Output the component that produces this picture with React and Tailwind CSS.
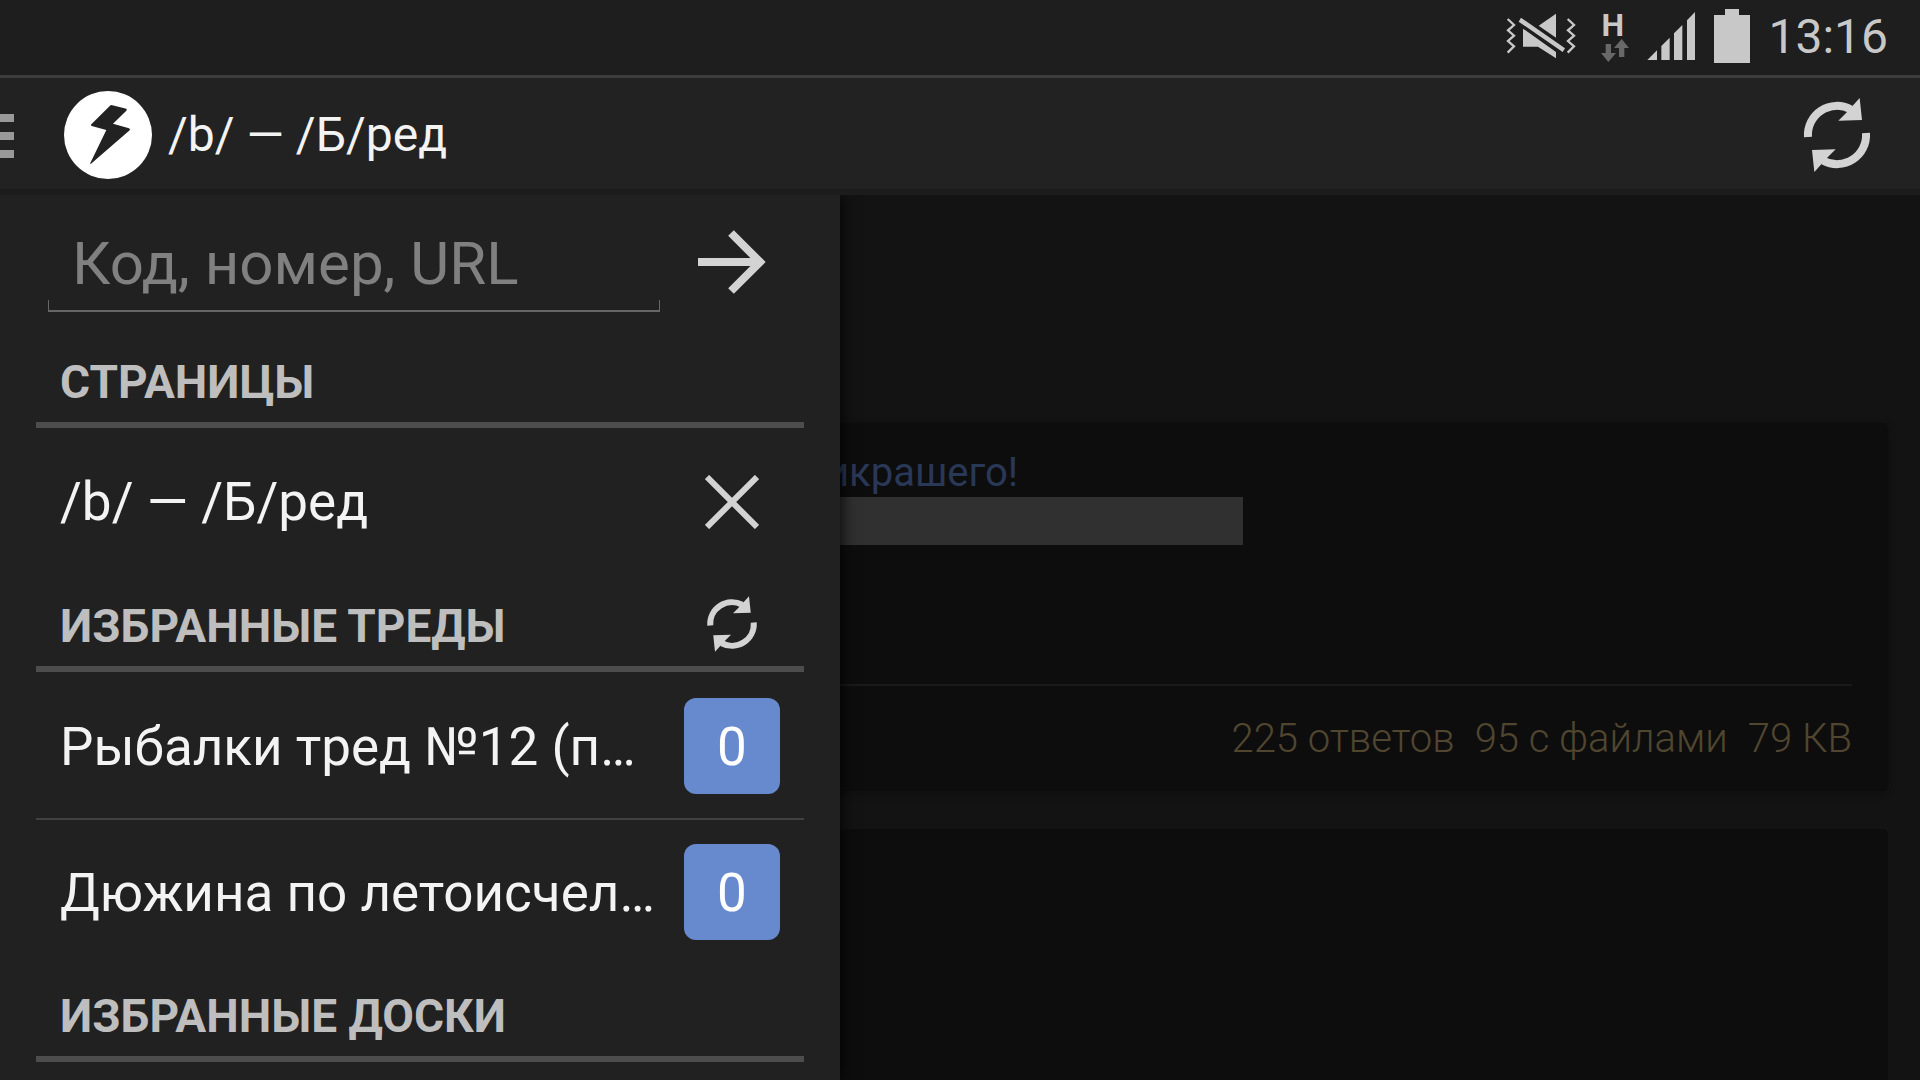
function VibrateMuteIcon() {
  return (
    <svg viewBox="48 36 216 150" className="h-[50px] w-[72px]" fill="#c8c8c8" aria-hidden="true">
      <g fill="none" stroke="#c8c8c8" strokeWidth="7">
        <path d="M56 60 75 78 57 94 75 110 57 126 75 142 56 161" />
        <path d="M236 60 255 78 237 94 255 110 237 126 255 142 236 161" />
      </g>
      <path d="M201 44V116L149 80Z" />
      <path d="M102 89 201 159V178L147 143H102Z" />
      <path d="M96 56 228 148 221 159 89 68Z" />
    </svg>
  );
}

function DataArrowsIcon() {
  return (
    <svg viewBox="330 120 84 69" className="h-[23px] w-[28px]" fill="#686868" aria-hidden="true">
      <path d="M344 135H360V162H375L352 189 330 162H344Z" />
      <path d="M392 120 414 147H400V174H384V147H369Z" />
    </svg>
  );
}

function SignalIcon() {
  return (
    <svg viewBox="471 36 147 150" className="h-[50px] w-[49px]" fill="#c8c8c8" aria-hidden="true">
      <path d="M472 183 501 154V183ZM514 183V141L539 116V183ZM552 183V103L577 78V183ZM591 183V64L615 39V183Z" />
    </svg>
  );
}

function BatteryIcon() {
  return (
    <svg viewBox="0 0 36 54" className="h-[54px] w-[36px]" fill="#c8c8c8" aria-hidden="true">
      <path d="M11 0H25V6H36V54H0V6H11Z" />
    </svg>
  );
}

function RefreshIcon({ className }) {
  return (
    <svg viewBox="-120 -120 240 240" className={className} aria-hidden="true">
      <g>
        <path d="M-87 6A87 87 0 0 1 41 -77" fill="none" stroke="#d3d3d3" strokeWidth="24" />
        <path d="M68 -111 75 -45 4 -43 28 -67 47 -88Z" fill="#d3d3d3" />
      </g>
      <g transform="rotate(180)">
        <path d="M-87 6A87 87 0 0 1 41 -77" fill="none" stroke="#d3d3d3" strokeWidth="24" />
        <path d="M68 -111 75 -45 4 -43 28 -67 47 -88Z" fill="#d3d3d3" />
      </g>
    </svg>
  );
}

function BoltLogo() {
  return (
    <svg viewBox="192 63 264 264" className="size-[88px]" aria-hidden="true">
      <circle cx="324" cy="195" r="132" fill="#fff" />
      <path
        d="M334 105 379 116Q382 119 379 122L339 161 387 175Q392 178 389 181L273 281Q270 283 271 279L319 180 275 168Q271 166 274 163L330 107Q332 105 334 105Z"
        fill="#222"
      />
    </svg>
  );
}

function ArrowIcon() {
  return (
    <svg viewBox="0 0 68 64" className="h-[64px] w-[68px]" fill="none" stroke="#d3d3d3" strokeWidth="8" aria-hidden="true">
      <path d="M0 32H60M33 3 62 32 33 61" />
    </svg>
  );
}

function CloseIcon() {
  return (
    <svg viewBox="0 0 54 54" className="size-[54px]" fill="none" stroke="#d3d3d3" strokeWidth="6" aria-hidden="true">
      <path d="M2 2 52 52M52 2 2 52" />
    </svg>
  );
}

function SectionHeader({ title, action }) {
  return (
    <div className="flex h-[98px] items-center justify-between border-b-[6px] border-[#4d4d4d] px-6 pt-2">
      <h2 className="pt-1 text-[46px] leading-none font-bold text-[#bebebe]">{title}</h2>
      {action}
    </div>
  );
}

function ThreadRow({ title, count }) {
  return (
    <li className="box-content flex h-[144px] items-center justify-between gap-6">
      <a href="#thread" className="min-w-0 pt-[2px] pl-6 text-[53px] leading-[72px] whitespace-nowrap text-[#f3f3f3]">
        {title}
      </a>
      <span className="mr-6 flex size-24 shrink-0 items-center justify-center rounded-xl bg-[#678acf] pt-1 text-[53px] text-white">
        {count}
      </span>
    </li>
  );
}

export default function App() {
  return (
    <div className="flex h-screen flex-col overflow-hidden bg-[#131313] font-[Roboto,sans-serif]">
      <div className="flex h-[78px] shrink-0 items-center justify-end border-b-[3px] border-[#3c3c3c] bg-[#1e1e1e] pr-8 pb-[3px] text-[#c8c8c8]">
        <VibrateMuteIcon />
        <div className="ml-6 flex flex-col items-start">
          <span className="text-[32px] leading-[28px] font-bold">H</span>
          <DataArrowsIcon />
        </div>
        <div className="ml-[18px]">
          <SignalIcon />
        </div>
        <div className="mr-[18px] ml-[18px]">
          <BatteryIcon />
        </div>
        <time className="pt-[2px] text-[48px] leading-none">13:16</time>
      </div>

      <header className="flex h-[117px] shrink-0 items-center justify-between border-b-[6px] border-[#1c1c1c] bg-[#222] pt-[3px] pr-[43px]">
        <div className="flex items-center">
          <button type="button" aria-label="Меню" className="mr-[50px] flex w-[14px] flex-col gap-[10px] pt-[2px]">
            <span className="h-2 bg-[#999]" />
            <span className="h-2 bg-[#999]" />
            <span className="h-2 bg-[#999]" />
          </button>
          <BoltLogo />
          <h1 className="ml-4 text-[48px] leading-none text-[#f3f3f3]">/b/ — /Б/ред</h1>
        </div>
        <button type="button" aria-label="Обновить">
          <RefreshIcon className="size-20" />
        </button>
      </header>

      <div className="flex min-h-0 flex-1 overflow-hidden">
        <aside className="z-10 w-[840px] shrink-0 bg-[#212121] px-9 shadow-[0_0_16px_#000]">
          <form className="flex h-[135px] items-center justify-between pb-px pl-3">
            <div className="w-[612px]">
              <input
                type="text"
                aria-label="Код, номер, URL"
                placeholder="Код, номер, URL"
                className="block h-[100px] w-full bg-transparent px-6 pt-[2px] text-[60px] text-[#f3f3f3] outline-none placeholder:text-[#808080]"
              />
              <div className="-mt-3 h-3 border-x border-b-2 border-[#666]" />
            </div>
            <button type="button" aria-label="Перейти" className="mr-6 flex w-24 justify-center">
              <ArrowIcon />
            </button>
          </form>

          <SectionHeader title="СТРАНИЦЫ" />
          <div className="mt-[2px] flex h-[144px] items-center justify-between px-6">
            <a href="#b" className="text-[53px] leading-[72px] text-[#f3f3f3]">
              /b/ — /Б/ред
            </a>
            <button type="button" aria-label="Закрыть" className="flex w-24 justify-center">
              <CloseIcon />
            </button>
          </div>

          <SectionHeader
            title="ИЗБРАННЫЕ ТРЕДЫ"
            action={
              <button type="button" aria-label="Обновить треды" className="flex w-24 justify-center">
                <RefreshIcon className="size-[60px]" />
              </button>
            }
          />
          <ul className="mt-[2px] divide-y-2 divide-[#404040]">
            <ThreadRow title="Рыбалки тред №12 (п…" count={0} />
            <ThreadRow title="Дюжина по летоисчел…" count={0} />
          </ul>

          <SectionHeader title="ИЗБРАННЫЕ ДОСКИ" />
        </aside>

        <main className="min-w-0 flex-1 pt-[228px] pr-8">
          <article className="-ml-4 flex h-[368px] flex-col justify-between rounded-md bg-[#0d0d0d] pr-9 shadow-[0_2px_6px_#0f0f0f]">
            <div className="pt-6">
              <a href="#post" className="block pt-[2px] pl-[2px] text-[40px] leading-[48px] text-[#2a3858]">
                икрашего!
              </a>
              <div className="h-12 w-[419px] bg-[#303030]" />
            </div>
            <footer className="flex h-[107px] justify-end gap-5 border-t-2 border-[#1a1a1a] pt-[29px] text-[40px] leading-[48px] font-light text-[#504630]">
              <span>225 ответов</span>
              <span>95 с файлами</span>
              <span>79 КВ</span>
            </footer>
          </article>
          <article className="mt-[38px] -ml-4 h-[300px] rounded-md bg-[#0d0d0d]" />
        </main>
      </div>
    </div>
  );
}
